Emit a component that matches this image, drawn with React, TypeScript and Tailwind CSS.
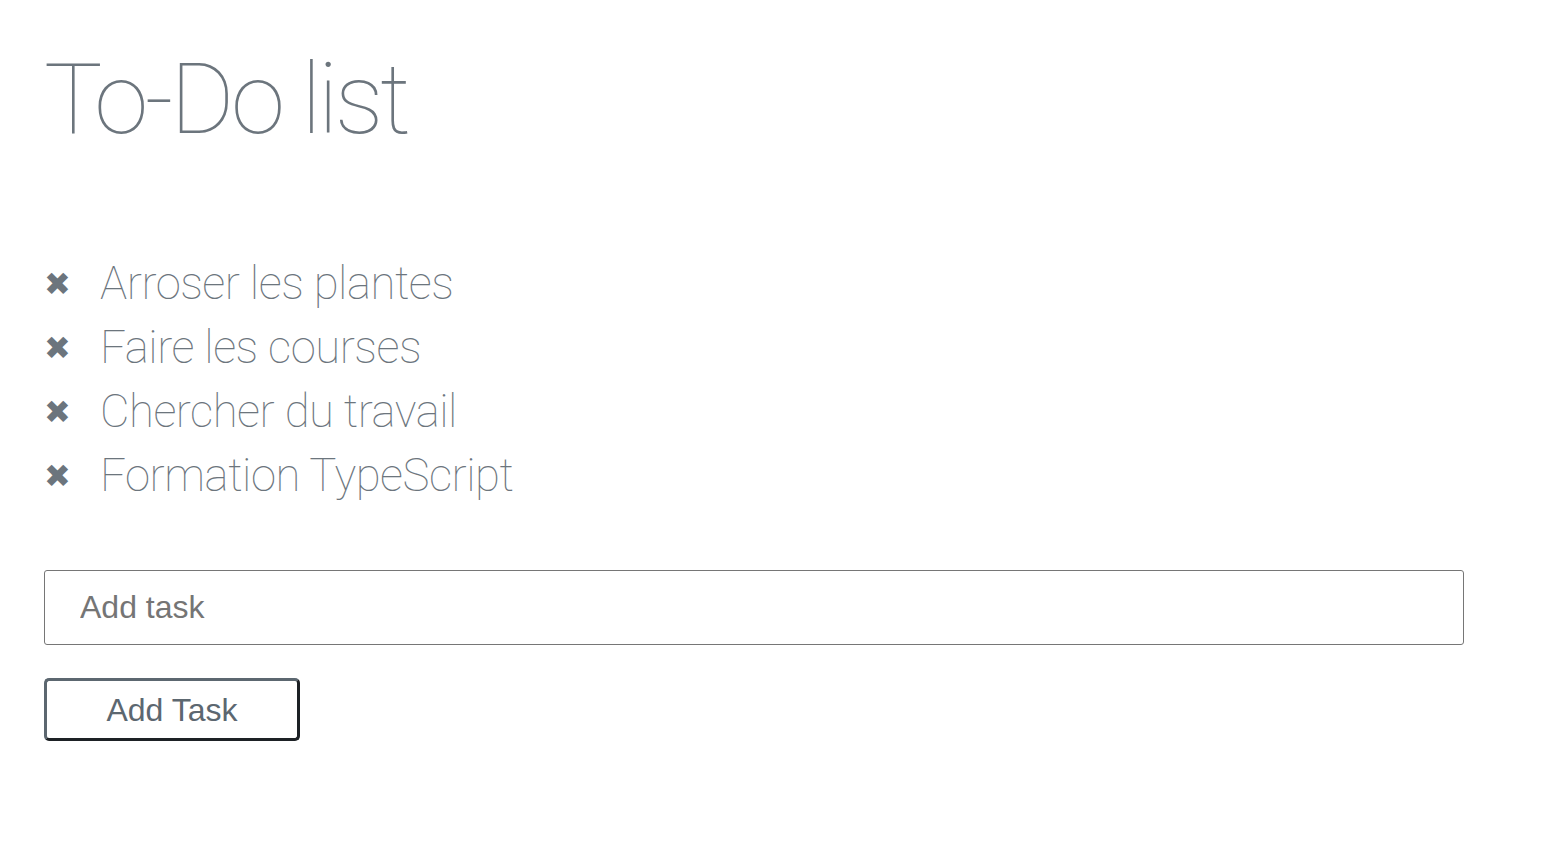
const tasks = ['Arroser les plantes', 'Faire les courses', 'Chercher du travail', 'Formation TypeScript'];

export default function App() {
  return (
    <div className="min-h-screen bg-white px-[44px] pt-[40px] text-[#6c757d]" style={{ fontFamily: 'Roboto, "Liberation Sans", sans-serif' }}>
      <h1 className="text-[98px] font-thin leading-[120px] tracking-[-3.5px]">To-Do list</h1>
      <ul className="mt-[92px] flex flex-col">
        {tasks.map((t) => (
          <li key={t} className="flex h-[64px] items-center">
            <span className="w-[56px] text-[32px] leading-none" style={{ fontFamily: '"DejaVu Sans", sans-serif' }}>✖</span>
            <span className="text-[45.5px] font-thin tracking-[-0.5px]">{t}</span>
          </li>
        ))}
      </ul>
      <input
        className="mt-[62px] block h-[75px] w-[1420px] rounded-[3px] border border-[#767676] px-[35px] text-[32px] text-[#333] placeholder:text-[#757575] outline-none"
        style={{ fontFamily: '"Liberation Sans", Arial, sans-serif' }}
        placeholder="Add task"
      />
      <button
        className="mt-[33px] block h-[63px] w-[256px] rounded-[5px] border-[3px] border-t-[#5c6770] border-l-[#5c6770] border-b-[#1d2125] border-r-[#1d2125] bg-white text-[32px] text-[#5c6770]"
        style={{ fontFamily: '"Liberation Sans", Arial, sans-serif' }}
      >
        Add Task
      </button>
    </div>
  );
}
